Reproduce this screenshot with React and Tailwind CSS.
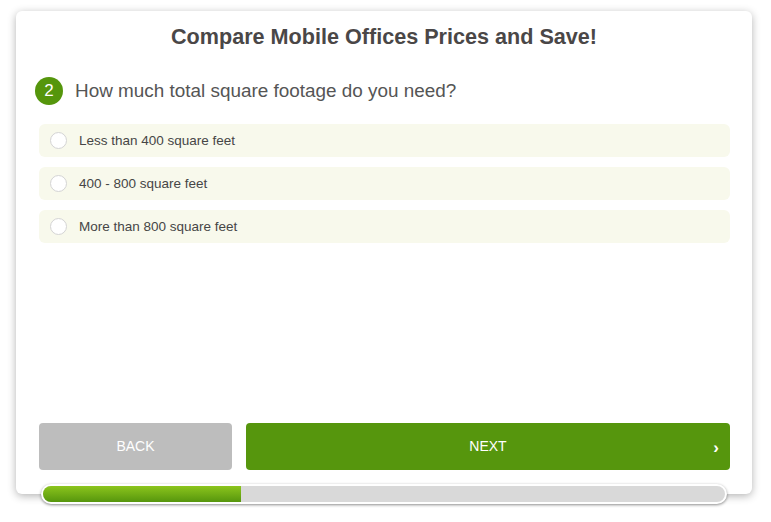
import React, { useState } from 'react';

const options = ['Less than 400 square feet', '400 - 800 square feet', 'More than 800 square feet'];

const App = () => {
    const [selected, setSelected] = useState(null);

    return (
        <div className="min-h-[522px] bg-white pl-4 pt-[11px] font-['Liberation_Sans',Arial,sans-serif]">
            <div className="flex h-[483px] w-[736px] flex-col rounded-md bg-white px-[23px] pt-3 shadow-[0_2px_8px_rgba(0,0,0,0.3)]">
                <h1 className="text-center text-[21.6px] font-bold leading-7 text-[#4a4747]">
                    Compare Mobile Offices Prices and Save!
                </h1>

                <div className="-ml-1 mt-[26px] flex items-center">
                    <span className="flex h-7 w-7 items-center justify-center rounded-full bg-[#55960c] text-[17px] text-white">2</span>
                    <span className="ml-[12px] text-[18.9px] text-[#555]">How much total square footage do you need?</span>
                </div>

                <div className="mt-[19px] flex w-[691px] flex-col gap-[10px]">
                    {options.map((opt, i) => (
                        <label
                            key={opt}
                            onClick={() => setSelected(i)}
                            className="flex h-[33px] cursor-pointer items-center rounded-md bg-[#f8f9ec] pl-[11px]"
                        >
                            <span className="flex h-[17px] w-[17px] items-center justify-center rounded-full border border-[#d4d4d4] bg-white">
                                {selected === i && <span className="h-[9px] w-[9px] rounded-full bg-[#55960c]" />}
                            </span>
                            <span className="ml-[12px] text-[13.5px] text-[#464646]">{opt}</span>
                        </label>
                    ))}
                </div>

                <div className="mt-auto flex w-[691px] gap-[14px]">
                    <button className="h-[47px] w-[193px] rounded bg-[#bdbdbd] text-[14px] uppercase text-white">Back</button>
                    <button className="relative h-[47px] flex-1 rounded bg-[#56960d] text-[14px] uppercase text-white">
                        Next
                        <span className="absolute right-[11px] top-1/2 -translate-y-1/2 text-[17px] font-bold leading-none">›</span>
                    </button>
                </div>

                <div className="-mb-[10px] ml-[2px] mt-[14px] h-5 w-[686px] overflow-hidden rounded-full border-2 border-white bg-[#d9d9d9] shadow-[0_1px_3px_rgba(0,0,0,0.45)]">
                    <div className="h-full w-[29%] bg-gradient-to-b from-[#8cc51d] to-[#56960d]" />
                </div>
            </div>
        </div>
    );
};

export default App;
